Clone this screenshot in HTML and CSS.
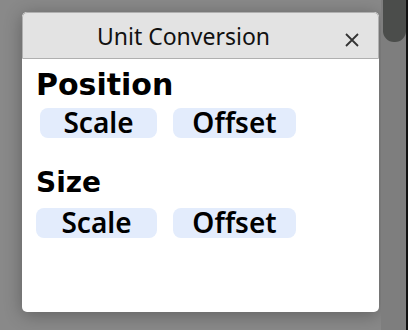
FILE: index.html
```html
<!DOCTYPE html>
<html>
	<head>
		<meta charset="UTF-8">
		<title>Unit Conversion</title>
		<link rel="stylesheet" href="styles.css">
	</head>
	<body>
		<div class="dialog">
			<div class="dialog-head">
				<span class="dialog-title">Unit Conversion</span>
				<span class="dialog-close">
					<svg width="14" height="14" viewBox="0 0 14 14"><path d="M1 1L13 13M13 1L1 13" stroke="#333" stroke-width="1.8" fill="none"/></svg>
				</span>
			</div>
			<div class="dialog-body">
				<h2 class="group-title">Position</h2>
				<div class="btn-row first">
					<button class="btn btn-scale">Scale</button>
					<button class="btn btn-offset">Offset</button>
				</div>
				<h2 class="group-title small">Size</h2>
				<div class="btn-row second">
					<button class="btn btn-scale wide">Scale</button>
					<button class="btn btn-offset">Offset</button>
				</div>
			</div>
		</div>
		<div class="scrollbar"><div class="scroll-thumb"></div></div>
	</body>
</html>
```
FILE: styles.css
```css
html,body{
	margin:0;
	padding:0;
}
body{
	width:408px;
	height:330px;
	background:#898989;
	padding:12px 0 0 22px;
	box-sizing:border-box;
	font-family:"Noto Sans",sans-serif;
	overflow:hidden;
}
.dialog{
	width:357px;
	height:300px;
	background:#fff;
	border-radius:5px;
	overflow:hidden;
	box-shadow:0 3px 18px rgba(0,0,0,0.3);
}
.dialog-head{
	height:45px;
	background:#e3e3e3;
	border:1px solid #b0b0b0;
	border-radius:5px 5px 0 0;
	display:flex;
	align-items:center;
	justify-content:center;
	position:relative;
}
.dialog-title{
	font-size:23px;
	color:#111;
	padding-right:34px;
}
.dialog-close{
	position:absolute;
	right:19px;
	top:20px;
	width:14px;
	height:14px;
}
.dialog-close svg{
	display:block;
}
.dialog-body{
	padding:0 0 0 14px;
}
.group-title{
	margin:8px 0 0;
	font-family:"DejaVu Sans",sans-serif;
	font-weight:bold;
	font-size:30px;
	line-height:36px;
	color:#000;
}
.group-title.small{
	font-size:28px;
	margin-top:27px;
}
.btn-row{
	display:flex;
	gap:16px;
}
.btn-row.first{
	padding-left:4px;
	margin-top:5px;
}
.btn-row.second{
	margin-top:7px;
}
.btn{
	height:30px;
	border:none;
	border-radius:8px;
	background:#e3ecfc;
	font-family:"Noto Sans",sans-serif;
	font-weight:600;
	font-size:28px;
	line-height:28px;
	padding:0 0 2px;
	color:#000;
}
.btn-scale{
	width:117px;
}
.btn-scale.wide{
	width:121px;
}
.btn-offset{
	width:123px;
}
.scrollbar{
	position:absolute;
	top:0;
	right:0;
	width:27px;
	height:330px;
	background:#7e7e7e;
	border-right:2px solid #111;
	box-sizing:border-box;
}
.scroll-thumb{
	margin-left:2px;
	width:23px;
	height:42px;
	background:#4b4d4b;
	border-radius:0 0 11px 11px;
}
```
